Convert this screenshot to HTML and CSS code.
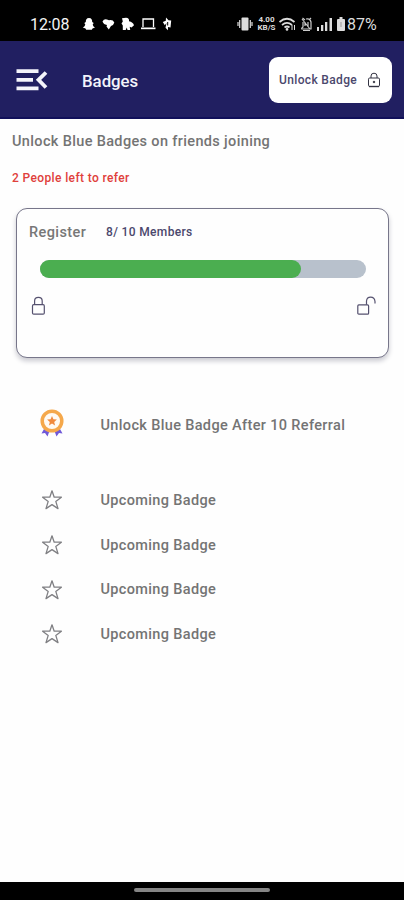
FILE: index.html
```html
<!DOCTYPE html>
<html lang="en">
<head>
<meta charset="utf-8">
<title>Badges</title>
<link rel="stylesheet" href="styles.css">
</head>
<body>
<svg class="defs" width="0" height="0">
  <symbol id="star" viewBox="0 0 22 22"><path d="M11 1.8 13.2 8.2H20.4L14.8 12.4 17 19.6 11 15.6 5 19.6 7.200 12.4 1.600 8.2H8.800Z" fill="none" stroke="#808084" stroke-width="1.3" stroke-linejoin="round"/></symbol>
</svg>
<div class="screen">
  <div class="status">
    <span class="clock">12:08</span>
    <svg class="status-left" width="91" height="18" viewBox="0 0 91 18" fill="#fff">
      <path d="M7 3C4.500 3 3.700 5 3.800 7L2.300 8 3.300 9.500C3 11 1.800 12 .8 12.600L3.500 13.500 4.200 14.800H9.800L10.500 13.500 13 12.600C12 12 11 11 10.700 9.500L11.700 8 10.200 7C10.300 5 9.500 3 7 3Z"/>
      <path d="M20.500 6.500Q22 3.500 25 4.500L27 5.200Q31 4.500 32.300 7.500 31.500 10.500 29 11L26.800 14.500 24.500 11.500 25 10Q21.500 9.500 20.500 6.500Z"/>
      <path d="M40 3.200 44 2.800Q47.500 3 47 6.200 51 7 52 10.200L49.500 12.500 47.700 11.700 48.200 15H45.500L44.800 12.500 43.700 15H40.800V10.500L39.500 8.500 40.800 6.500Z"/>
      <path d="M61 12V4H71.500V12" fill="none" stroke="#fff" stroke-width="1.300"/><path d="M59 12.500H73.500V14.200H59Z"/>
      <path d="M84 2.500 86.500 5.300 89.200 5.500 88.500 12.500 86 12V15.200L83.500 12.800 84.500 8 82.800 10.200 80.800 7 83.800 5.800Z"/><path d="M85.700 7V10.500" stroke="#000"/>
    </svg>
    <svg class="vibrate" width="17" height="20" viewBox="0 0 17 20" fill="#ddd">
      <rect x="4.500" y="3.500" width="7" height="13" rx="1"/><path d="M2.700 6V14M13.300 6V14M1 8V12M15 8V12" stroke="#ddd" stroke-width="1.200"/>
    </svg>
    <div class="rate"><span>4.00</span><span>KB/S</span></div>
    <svg width="68" height="20" viewBox="40 0 68 20" fill="#ddd">
      <g fill="none" stroke="#ddd" stroke-width="1.700"><path d="M41.500 8Q49 1.500 56.500 8M44 11Q49 6.800 54 11M46.500 13.500Q49 11.500 51.500 13.500"/></g><circle cx="49" cy="15.400" r="1.300"/><path d="M54 11V16M56.500 11V16" stroke="#ddd"/>
      <path d="M64 5 72 15M65 8V13Q63 14.500 64 15H73V8Q72 4 68 5M65 16.500H72M64.500 4L67 6M73 4L71 6M67 8V12M70 8V13" fill="none" stroke="#ccc" stroke-width="1.200"/>
      <path d="M79 13H81V17H79ZM83 11H85.300V17H83ZM87 8H89.300V17H87ZM91.500 4H94V17H91.500Z"/>
      <rect x="99" y="5" width="8" height="12" rx="1"/><rect x="101.500" y="3" width="3" height="2"/><path d="M103 8V13" stroke="#999"/>
    </svg>
    <span class="percent">87%</span>
  </div>
  <header class="header">
    <svg class="menu" width="33" height="24" viewBox="0 0 33 24" fill="none" stroke="#f4f4fb" stroke-width="3.800"><path d="M0.500 3.200H22.500M0.500 11.800H17M0.500 20.400H22.500M30 4.500 22.500 11.800 30 19.500"/></svg>
    <h1 class="title">Badges</h1>
    <button class="unlock"><span class="unlock-text">Unlock Badge</span>
      <svg width="14" height="16" viewBox="0 0 14 16" fill="none" stroke="#333342"><rect x="1.500" y="6" width="11" height="8.500" rx="1.200"/><path d="M4 6V4Q4 1.200 7 1.200T10 4V6"/><circle cx="7" cy="10" r=".8" fill="#222"/><path d="M2 14.500H12" stroke-width="1.400"/></svg>
    </button>
  </header>
  <main class="content">
    <p class="lead"><span>Unlock Blue Badges on friends joining</span></p>
    <p class="left"><span>2 People left to refer</span></p>
    <section class="card">
      <div class="card-head"><span class="register">Register</span><span class="members">8/ 10 Members</span></div>
      <div class="track"><div class="fill" style="width:80%"></div></div>
      <div class="locks">
        <svg width="15" height="20" viewBox="0 0 15 20" fill="none" stroke="#55516f" stroke-width="1.200"><rect x="1.500" y="8.700" width="11.800" height="9.500" rx="1.200"/><path d="M3.600 8.500V5Q3.600 1.300 7.400 1.300T11.200 5V8.500"/></svg>
        <svg width="20" height="20" viewBox="0 0 20 20" fill="none" stroke="#55516f" stroke-width="1.200"><rect x="1.800" y="8.900" width="10.800" height="9.300" rx="1"/><path d="M10.500 8.700V5Q10.900 1.200 14.600 1.200 18.600 1.200 19 5.500V7.500"/></svg>
      </div>
    </section>
    <ul class="badges">
      <li class="badge first">
        <svg width="26" height="30" viewBox="0 0 26 30"><path d="M5 21 2.500 25.500 6 25 8.500 28.500 10.500 23M21 21 23.500 25.500 20 25 17.500 28.500 15.500 23" fill="#7059d8"/><circle cx="13" cy="13" r="9.800" fill="#fffaf3" stroke="#f5a84b" stroke-width="3.500"/><path d="M13 8 14.400 11.300 17.900 11.600 15.200 13.900 16.100 17.400 13 15.500 9.900 17.400 10.800 13.900 8.100 11.600 11.600 11.300Z" fill="#f18a3d"/></svg>
        <span class="goal">Unlock Blue Badge After 10 Referral</span>
      </li>
      <li class="badge"><svg width="22" height="22"><use href="#star"/></svg><span>Upcoming Badge</span></li>
      <li class="badge"><svg width="22" height="22"><use href="#star"/></svg><span>Upcoming Badge</span></li>
      <li class="badge"><svg width="22" height="22"><use href="#star"/></svg><span>Upcoming Badge</span></li>
      <li class="badge"><svg width="22" height="22"><use href="#star"/></svg><span>Upcoming Badge</span></li>
    </ul>
  </main>
  <footer class="nav"><div class="handle"></div></footer>
</div>
</body>
</html>
```
FILE: styles.css
```css
* { box-sizing: border-box; }
body { margin: 0; font-family: Roboto, "Liberation Sans", sans-serif; background: #fefefe; }
h1, p, ul { margin: 0; padding: 0; }
svg { display: block; flex: none; }
.defs { display: none; }
.screen { width: 404px; height: 900px; display: flex; flex-direction: column; overflow: hidden; }
.status { height: 41px; padding: 7px 0 0 30px; background: #000; color: #f4f4f4; display: flex; align-items: center; white-space: nowrap; }
.clock { width: 52px; font-size: 16px; letter-spacing: -.1px; }
.vibrate { margin-left: 64px; }
.rate { width: 21px; margin: 0 1px 0 2px; display: flex; flex-direction: column; align-items: center; font-size: 8px; line-height: 8px; font-weight: 700; color: #ddd; }
.percent { font-size: 16px; margin-left: 1px; color: #ddd; }
.header { height: 78px; padding: 2px 12px 0 16px; background: #211f61; border-bottom: 2px solid #11105a; display: flex; align-items: center; }
.title { margin: 1px 0 0 33px; color: #f4f4fb; font-size: 16.800px; font-weight: 500; }
.unlock { margin-left: auto; width: 123px; height: 46px; padding: 0 11px 0 10px; background: #fff; border: 0; border-radius: 9px; display: flex; align-items: center; justify-content: space-between; font-family: inherit; }
.unlock-text { font-size: 12px; font-weight: 500; letter-spacing: .35px; color: #4b486d; white-space: nowrap; }
.content { flex: 1; padding: 13px 15px 0 12px; }
.lead { font-size: 14.500px; line-height: 20px; font-weight: 500; letter-spacing: .35px; color: #747474; white-space: nowrap; }
.left { margin-top: 18px; font-size: 12px; line-height: 16px; font-weight: 500; letter-spacing: .37px; color: #e0403b; }
.card { margin: 22px 0 0 4px; height: 150px; padding: 13px 12px 0; background: #fefefe; border: 1px solid #77768a; border-radius: 11px; box-shadow: 0 3px 5px #c9c9d0; }
.card-head { display: flex; align-items: center; height: 20px; }
.register { width: 77px; font-size: 14.500px; letter-spacing: .4px; font-weight: 500; color: #777; }
.members { font-size: 12px; font-weight: 500; letter-spacing: .35px; color: #4b486d; }
.track { width: 326px; height: 18px; margin: 18px 0 0 11px; border-radius: 9px; background: #b8c1cc; }
.fill { height: 18px; border-radius: 9px; background: #4bae50; }
.locks { display: flex; justify-content: space-between; margin: 18px 0 0 2px; }
.badges { list-style: none; }
.badge { height: 44.700px; display: flex; align-items: center; padding-left: 29px; gap: 37.500px; color: #747474; font-size: 14.500px; font-weight: 500; letter-spacing: .35px; white-space: nowrap; }
.first { height: 60px; margin: 35px 0 25px; padding-left: 27px; gap: 35.500px; }
.goal { padding-top: 4px; }
.nav { height: 18px; background: #000; display: flex; justify-content: center; padding-top: 6px; }
.handle { width: 136px; height: 4px; border-radius: 2px; background: #858585; }
```
